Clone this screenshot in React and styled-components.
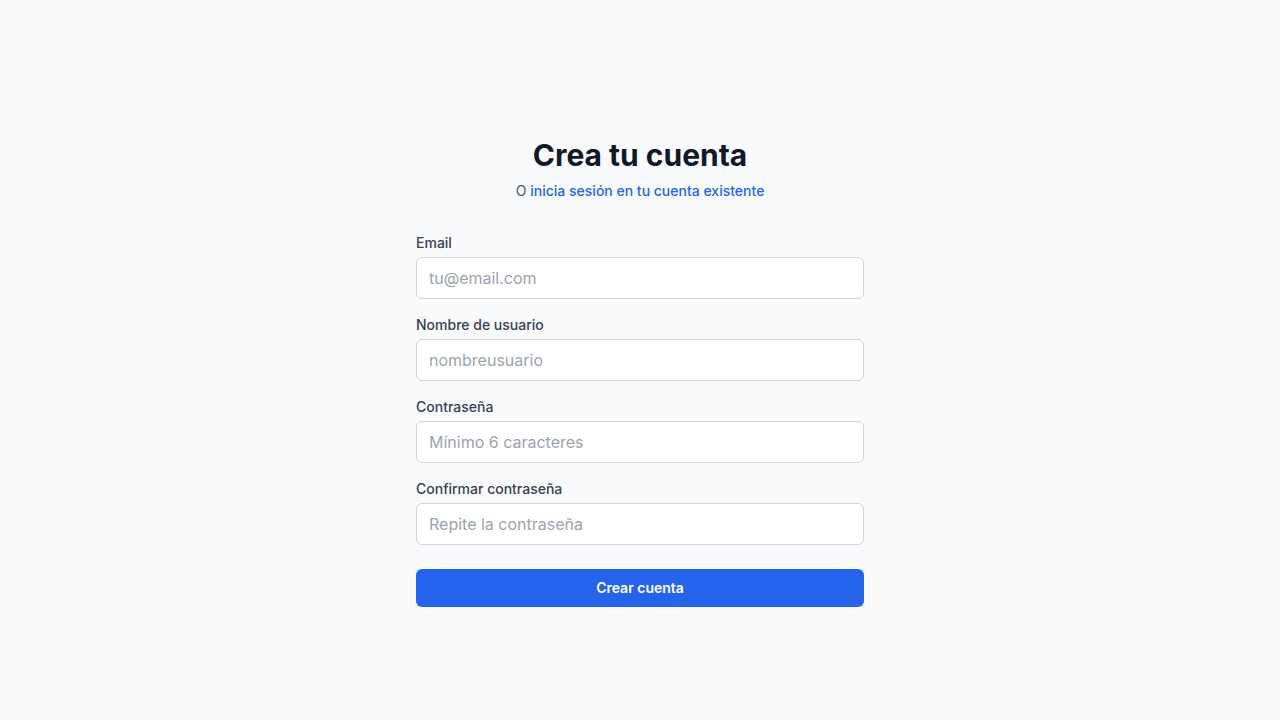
import React from "react";
import styled, { createGlobalStyle } from "styled-components";

const Global = createGlobalStyle`
  * { box-sizing: border-box; }
  html, body { margin: 0; padding: 0; background: #f9fafb; }
  body { font-family: Inter, "Noto Sans", "Liberation Sans", sans-serif; -webkit-font-smoothing: antialiased; }
`;

const Page = styled.div`
  min-height: 100vh;
  display: flex;
  align-items: center;
  justify-content: center;
  padding: 0 16px;
`;

const Card = styled.div`
  width: 100%;
  max-width: 448px;
  display: flex;
  flex-direction: column;
  padding-top: 24px;
`;

const Title = styled.h2`
  margin: 0;
  text-align: center;
  font-size: 30px;
  line-height: 36px;
  font-weight: 700;
  color: #111827;
`;

const Subtitle = styled.p`
  margin: 8px 0 0;
  text-align: center;
  font-size: 14px;
  line-height: 20px;
  color: #4b5563;
`;

const Link = styled.a`
  color: #2563eb;
  font-weight: 500;
  text-decoration: none;
`;

const Form = styled.form`
  margin-top: 32px;
  display: flex;
  flex-direction: column;
`;

const Fields = styled.div`
  display: flex;
  flex-direction: column;
  gap: 16px;
`;

const Field = styled.div`
  display: flex;
  flex-direction: column;
  gap: 4px;
`;

const Label = styled.label`
  font-size: 14px;
  line-height: 20px;
  font-weight: 500;
  color: #374151;
`;

const Input = styled.input`
  display: block;
  width: 100%;
  height: 42px;
  padding: 8px 12px;
  font-family: inherit;
  font-size: 16px;
  line-height: 24px;
  color: #111827;
  background: #fff;
  border: 1px solid #d1d5db;
  border-radius: 6px;
  outline: none;
  &::placeholder { color: #9ca3af; }
`;

const Button = styled.button`
  margin-top: 24px;
  height: 38px;
  width: 100%;
  border: 1px solid transparent;
  border-radius: 6px;
  background: #2563eb;
  color: #fff;
  font-family: inherit;
  font-size: 14px;
  line-height: 20px;
  font-weight: 600;
  cursor: pointer;
`;

const fields = [
  { id: "email", label: "Email", type: "email", placeholder: "tu@email.com" },
  { id: "username", label: "Nombre de usuario", type: "text", placeholder: "nombreusuario" },
  { id: "password", label: "Contraseña", type: "password", placeholder: "Mínimo 6 caracteres" },
  { id: "confirm", label: "Confirmar contraseña", type: "password", placeholder: "Repite la contraseña" },
];

export default function App() {
  return (
    <>
      <Global />
      <Page>
        <Card>
          <Title>Crea tu cuenta</Title>
          <Subtitle>
            O <Link href="#">inicia sesión en tu cuenta existente</Link>
          </Subtitle>
          <Form onSubmit={(e) => e.preventDefault()}>
            <Fields>
              {fields.map((f) => (
                <Field key={f.id}>
                  <Label htmlFor={f.id}>{f.label}</Label>
                  <Input id={f.id} type={f.type} placeholder={f.placeholder} />
                </Field>
              ))}
            </Fields>
            <Button type="submit">Crear cuenta</Button>
          </Form>
        </Card>
      </Page>
    </>
  );
}
